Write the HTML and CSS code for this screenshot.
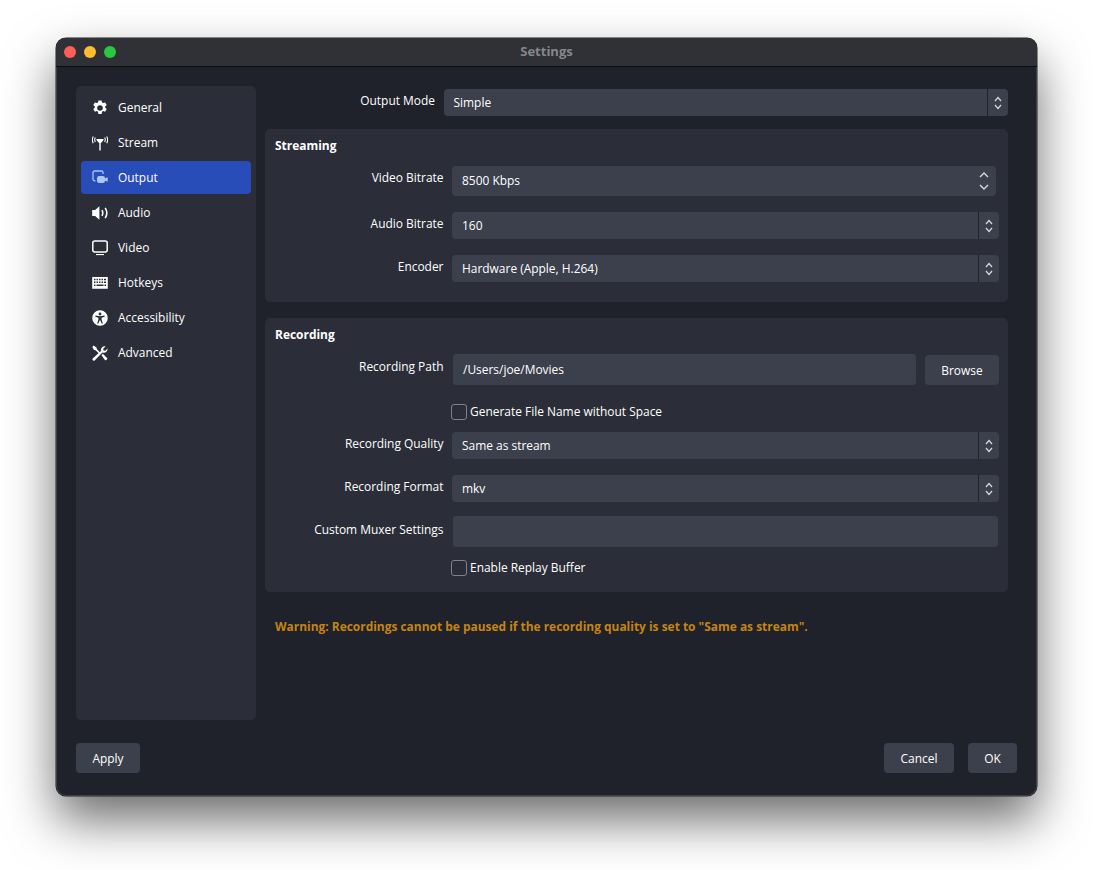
FILE: index.html
```html
<!DOCTYPE html>
<html lang="en">
<head>
  <meta charset="UTF-8" />
  <title>Settings</title>
  <link rel="stylesheet" href="styles.css">
</head>
<body>
  <div class="window">
    <div class="titlebar">
      <div class="lights">
        <span class="light red"></span>
        <span class="light yellow"></span>
        <span class="light green"></span>
      </div>
      <div class="title">Settings</div>
    </div>

    <div class="content">
      <nav class="sidebar">
        <div class="nav-item">
          <svg class="icon" viewBox="0 0 16 16"><path fill="#fff" fill-rule="evenodd" d="M6.400 .4h3.200l.4 2 1.200.7 1.900-.7 1.600 2.700-1.500 1.300v1.400l1.500 1.300-1.600 2.700-1.900-.7-1.200.7-.4 2.100H6.400l-.4-2.100-1.200-.7-1.900.7-1.600-2.700 1.500-1.300V6.400L1.300 5.100l1.600-2.700 1.900.7 1.200-.7zM8 5.200a2.800 2.800 0 1 0 0 5.600 2.800 2.800 0 0 0 0-5.600z"/></svg>
          <span>General</span>
        </div>
        <div class="nav-item">
          <svg class="icon" viewBox="0 0 16 16"><path fill="#fff" d="M7.300 7h1.400v8.500H7.300z"/><path fill="#fff" d="M4.300 4h7.400l-.6 1.500-2.100 2.500h-2L4.900 5.500z"/><path fill="none" stroke="#fff" stroke-width="1.100" d="M3.300 2.500c-.7 1.400-.7 3 0 4.400M1.300 1.500C0 3.700 0 5.900 1.300 8.100M12.700 2.500c.7 1.400 .7 3 0 4.400M14.700 1.500c1.300 2.200 1.300 4.400 0 6.600"/></svg>
          <span>Stream</span>
        </div>
        <div class="nav-item active">
          <svg class="icon" viewBox="0 0 16 16"><path fill="none" stroke="#a9c6f5" stroke-width="1.300" d="M3.500 10.800H2.600A1.600 1.600 0 0 1 1 9.200V2.600A1.600 1.600 0 0 1 2.600 1h6.800A1.600 1.600 0 0 1 11 2.600v1.400"/><rect x="5" y="6" width="8" height="7" rx="2.200" fill="#a9c6f5"/><path fill="#a9c6f5" d="M13 8.200l2.700-1v4.600L13 10.800z"/></svg>
          <span>Output</span>
        </div>
        <div class="nav-item">
          <svg class="icon" viewBox="0 0 16 16"><path fill="#fff" d="M.2 5h2.900L7.400 1.200v13.600L3.100 11H.2z"/><path fill="none" stroke="#fff" stroke-width="1.600" d="M10 5.200c1 1.800 1 3.800 0 5.600M13.200 2.800c2 3.200 2 7.200 0 10.400"/></svg>
          <span>Audio</span>
        </div>
        <div class="nav-item">
          <svg class="icon" viewBox="0 0 16 16"><rect x=".8" y="1" width="14.400" height="11" rx="2" fill="none" stroke="#fff" stroke-width="1.500"/><path fill="#fff" d="M4 14h8v1.100H4z"/></svg>
          <span>Video</span>
        </div>
        <div class="nav-item">
          <svg class="icon" viewBox="0 0 16 16"><path fill="#fff" fill-rule="evenodd" d="M.2 2h15.600v11.800H.2zM2 3.800v1.500h1.500V3.800zm2.500 0v1.500H6V3.800zm2.500 0v1.500h1.500V3.800zm2.500 0v1.500H11V3.800zm2.500 0v1.500h2V3.800zM2 6.500V8h1.500V6.500zm2.500 0V8H6V6.500zM7 6.500V8h1.500V6.500zm2.500 0V8H11V6.500zM12 6.500V8h2V6.500zM2 9.500v1.500h1.500V9.500zm2.500 0v1.500H11.500V9.500zm8 0v1.500H14V9.500z"/></svg>
          <span>Hotkeys</span>
        </div>
        <div class="nav-item">
          <svg class="icon" viewBox="0 0 16 16"><path fill="#fff" fill-rule="evenodd" d="M8 .2a7.800 7.800 0 1 0 0 15.600A7.800 7.800 0 0 0 8 .2zM8 2.600a1.400 1.400 0 1 1 0 2.800 1.400 1.400 0 0 1 0-2.800zM3.600 5.600L8 6.300l4.400-.7.300 1.100-3.100 1v2.100l1.300 3.600-1.100.4L8.400 10.500h-.8l-1.400 3.300-1.100-.4 1.300-3.600V7.700l-3.100-1z"/></svg>
          <span>Accessibility</span>
        </div>
        <div class="nav-item">
          <svg class="icon" viewBox="0 0 16 16"><path fill="#fff" d="M1.600 .6L4.500 2.500l.3 1.600 3.300 3.300-1.200 1.200-3.300-3.300-1.600-.3L.3 1.900z"/><path fill="#fff" d="M15.600 3.400l-2.400 2.400-1.600-.4-.4-1.600L13.600 1.400A3.800 3.800 0 0 0 9 6.100L.9 13.200a1.400 1.400 0 0 0 2 2l7.500-7.800a3.800 3.800 0 0 0 5.200-4z"/><path fill="#fff" d="M9.500 10.200l1.400-1.400 4.100 4.100a1 1 0 0 1 0 1.400l-.7 .7a1 1 0 0 1-1.400 0z"/></svg>
          <span>Advanced</span>
        </div>
      </nav>

      <main class="main">
        <div class="mode-row">
          <label class="mode-label">Output Mode</label>
          <div class="select mode-select">
            <span class="select-value">Simple</span>
            <span class="stepper"><svg viewBox="0 0 10 16"><path d="M2 6l3-3.500 3 3.500M2 10l3 3.500 3-3.500"/></svg></span>
          </div>
        </div>

        <section class="group streaming">
          <h2>Streaming</h2>
          <div class="row bitrate-row">
            <label>Video Bitrate</label>
            <div class="select spin">
              <span class="select-value">8500 Kbps</span>
              <span class="spin-arrows"><svg viewBox="0 0 12 26"><path d="M2 9l4-4 4 4M2 17l4 4 4-4"/></svg></span>
            </div>
          </div>
          <div class="row">
            <label>Audio Bitrate</label>
            <div class="select">
              <span class="select-value">160</span>
              <span class="stepper"><svg viewBox="0 0 10 16"><path d="M2 6l3-3.500 3 3.500M2 10l3 3.500 3-3.500"/></svg></span>
            </div>
          </div>
          <div class="row">
            <label>Encoder</label>
            <div class="select">
              <span class="select-value">Hardware (Apple, H.264)</span>
              <span class="stepper"><svg viewBox="0 0 10 16"><path d="M2 6l3-3.500 3 3.500M2 10l3 3.500 3-3.500"/></svg></span>
            </div>
          </div>
        </section>

        <section class="group recording">
          <h2>Recording</h2>
          <div class="row path-row">
            <label>Recording Path</label>
            <div class="text-input">/Users/joe/Movies</div>
            <button class="btn browse">Browse</button>
          </div>
          <div class="check-row">
            <span class="checkbox"></span>
            <span>Generate File Name without Space</span>
          </div>
          <div class="row quality-row">
            <label>Recording Quality</label>
            <div class="select">
              <span class="select-value">Same as stream</span>
              <span class="stepper"><svg viewBox="0 0 10 16"><path d="M2 6l3-3.500 3 3.500M2 10l3 3.500 3-3.500"/></svg></span>
            </div>
          </div>
          <div class="row format-row">
            <label>Recording Format</label>
            <div class="select">
              <span class="select-value">mkv</span>
              <span class="stepper"><svg viewBox="0 0 10 16"><path d="M2 6l3-3.500 3 3.500M2 10l3 3.500 3-3.500"/></svg></span>
            </div>
          </div>
          <div class="row muxer-row">
            <label>Custom Muxer Settings</label>
            <div class="text-input"></div>
          </div>
          <div class="check-row replay-row">
            <span class="checkbox"></span>
            <span>Enable Replay Buffer</span>
          </div>
        </section>

        <p class="warning">Warning: Recordings cannot be paused if the recording quality is set to "Same as stream".</p>
      </main>
    </div>

    <div class="footer">
      <button class="btn apply">Apply</button>
      <div class="footer-right">
        <button class="btn cancel">Cancel</button>
        <button class="btn ok">OK</button>
      </div>
    </div>
  </div>
</body>
</html>
```

FILE: styles.css
```css
html, body {
  margin: 0;
  height: 870px;
  overflow: hidden;
  background: #fff;
}
body {
  font-family: "Open Sans", sans-serif;
  font-size: 11.95px;
  color: #fff;
  padding: 38px 56px 0;
  box-sizing: border-box;
}
.window {
  width: 981px;
  height: 758px;
  box-sizing: border-box;
  background: #1f212b;
  border-radius: 10px;
  box-shadow: 0 0 0 .5px #222, inset 0 0 0 1px #3f4045, 0 24px 50px rgba(0, 0, 0, .58);
  overflow: hidden;
  display: flex;
  flex-direction: column;
}

/* title bar */
.titlebar {
  height: 29px;
  flex: none;
  box-sizing: border-box;
  background: #2f3136;
  border-bottom: 1px solid #0c0c0e;
  display: flex;
  align-items: center;
  position: relative;
}
.lights {
  display: flex;
  gap: 8px;
  padding-left: 8px;
}
.light {
  width: 12px;
  height: 12px;
  border-radius: 50%;
}
.red { background: #fe5f57; }
.yellow { background: #febc2e; }
.green { background: #28c840; }
.title {
  position: absolute;
  left: 0;
  right: 0;
  padding-bottom: 2px;
  text-align: center;
  font-weight: 700;
  font-size: 13px;
  color: #85878b;
}

/* main area */
.content {
  display: flex;
  padding: 19px 29px 0 20px;
  height: 634px;
  flex: none;
}
.sidebar {
  width: 180px;
  height: 634px;
  flex: none;
  box-sizing: border-box;
  background: #2b2e38;
  border-radius: 5px;
  padding: 5px;
}
.nav-item {
  height: 33px;
  margin-bottom: 2px;
  padding-left: 11px;
  display: flex;
  align-items: center;
  gap: 10px;
  border-radius: 4px;
}
.nav-item.active {
  background: #284cb8;
}
.icon {
  width: 16px;
  height: 16px;
  flex: none;
}
.main {
  width: 743px;
  margin-left: 9px;
}
.mode-row {
  display: flex;
  align-items: center;
  padding-top: 3px;
  height: 27px;
}
.mode-label {
  width: 170px;
  text-align: right;
  margin-top: -4px;
}
.mode-select {
  margin-left: 8px;
  width: 565px;
  flex: none;
}
.group {
  background: #2b2e38;
  border-radius: 5px;
  padding: 8px 9px 0 10px;
  box-sizing: border-box;
}
.group h2 {
  margin: 0;
  font-size: 11.95px;
  line-height: 17px;
  font-weight: 700;
}
.streaming {
  margin-top: 13px;
  height: 173px;
}
.recording {
  margin-top: 16px;
  height: 274px;
}
.row {
  display: flex;
  align-items: flex-start;
  margin-top: 16px;
}
.row label {
  width: 168.500px;
  flex: none;
  text-align: right;
  line-height: 24px;
}
.select {
  flex: 1;
  height: 27px;
  margin-left: 8.500px;
  background: #3c404d;
  border-radius: 4px;
  display: flex;
  align-items: center;
  justify-content: space-between;
}
.select-value {
  padding-left: 10px;
}
.stepper {
  width: 20px;
  height: 27px;
  border-left: 1px solid #1f212b;
  display: flex;
  align-items: center;
  justify-content: center;
}
.stepper svg {
  width: 10px;
  height: 16px;
}
.stepper path, .spin-arrows path {
  fill: none;
  stroke: #d8d9dc;
  stroke-width: 1.200;
}
.spin-arrows path {
  stroke-width: 1.400;
}
.bitrate-row {
  margin-top: 12px;
}
.bitrate-row .select {
  height: 30px;
  margin-right: 3px;
}
.bitrate-row .select-value {
  padding-bottom: 2px;
}
.spin-arrows {
  display: flex;
  padding-right: 6px;
}
.spin-arrows svg {
  width: 12px;
  height: 26px;
}
.text-input {
  flex: 1;
  height: 31px;
  line-height: 31px;
  margin-left: 9.500px;
  padding-left: 10px;
  background: #3c404d;
  border-radius: 3px;
  box-sizing: border-box;
}
.path-row {
  margin-top: 11px;
}
.path-row label {
  line-height: 26px;
}
.btn {
  font: inherit;
  color: #fff;
  background: #3c404d;
  border: none;
  border-radius: 4px;
  height: 30px;
  padding: 0;
}
.browse {
  width: 74px;
  margin: 1px 0 0 9px;
  flex: none;
}
.check-row {
  display: flex;
  align-items: center;
  height: 17px;
  margin: 18px 0 0 176px;
  gap: 3px;
}
.checkbox {
  width: 14px;
  height: 14px;
  border: 1px solid #80828a;
  border-radius: 3px;
  background: #2b2e38;
}
.quality-row {
  margin-top: 12px;
}
.format-row {
  margin-top: 16px;
}
.muxer-row {
  margin-top: 14px;
}
.muxer-row .text-input {
  margin-right: 1px;
}
.muxer-row label {
  line-height: 27px;
}
.check-row.replay-row {
  margin-top: 12px;
}
.warning {
  margin: 26px 0 0 10px;
  line-height: 17px;
  font-weight: 700;
  color: #c6850f;
}

/* bottom buttons */
.footer {
  display: flex;
  justify-content: space-between;
  padding: 23px 20px 0;
}
.footer-right {
  display: flex;
  gap: 14px;
}
.apply { width: 64px; }
.cancel { width: 70px; }
.ok { width: 49px; }
```
